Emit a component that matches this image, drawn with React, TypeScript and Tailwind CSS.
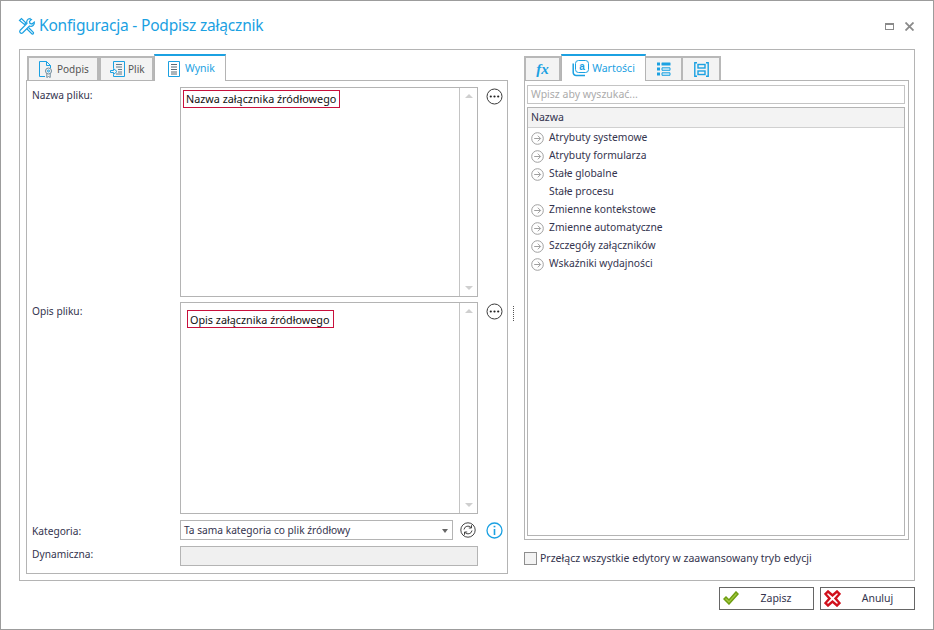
import type { ReactNode } from "react";

const FONT = "font-['Noto_Sans','Open_Sans',sans-serif]";

const treeItems = [
  { name: "Atrybuty systemowe", arrow: true },
  { name: "Atrybuty formularza", arrow: true },
  { name: "Stałe globalne", arrow: true },
  { name: "Stałe procesu", arrow: false },
  { name: "Zmienne kontekstowe", arrow: true },
  { name: "Zmienne automatyczne", arrow: true },
  { name: "Szczegóły załączników", arrow: true },
  { name: "Wskaźniki wydajności", arrow: true },
];

function ToolsIcon() {
  return (
    <svg width="18" height="18" viewBox="0 0 18 18" fill="none" stroke="#1ba1e2" strokeWidth="1.2">
      <path d="M1.500 3.500 3.500 1.500 8 6 6.500 7.500Z" />
      <path d="M12 1.500a3.500 3.500 0 0 0-3 5L2 13.500a1.800 1.800 0 0 0 2.500 2.500l7-7a3.500 3.500 0 0 0 4.800-4l-2.300 2-2-.6-.5-2 2-2a3 3 0 0 0-1.500-.4Z" />
      <path d="M10.500 10.500 15.500 15.500a1.200 1.200 0 0 1-1.500 1.500L9 12" />
    </svg>
  );
}

function SignIcon() {
  return (
    <svg width="14" height="17" viewBox="0 0 14 17" fill="none" stroke="#1ba1e2" strokeWidth="1">
      <path d="M6 15.500H.5V.5H7.500L11.500 4.500V7" />
      <path d="M7.500.5V4.500H11.500" />
      <circle cx="9.500" cy="10" r="3" stroke="#6f8a9a" />
      <circle cx="9.500" cy="10" r="1" stroke="#1ba1e2" />
      <path d="M7.800 12.500V16.500L9.500 15.500 11.200 16.500V12.500" stroke="#6f8a9a" />
    </svg>
  );
}

function FileIcon() {
  return (
    <svg width="15" height="17" viewBox="0 0 15 17" fill="none" stroke="#1ba1e2" strokeWidth="1">
      <path d="M3.500 7V.5H14.500V15.500H3.500V14" />
      <path d="M6 3.500H12M6 6H12M8 8.500H12M8 11H12M6 13H12" stroke="#5f7a8a" />
      <path d="M.5 9.500H3.500V7.500L7 10.500 3.500 13.500V11.500H.5Z" />
    </svg>
  );
}

function DocIcon() {
  return (
    <svg width="12" height="16" viewBox="0 0 12 16" fill="none" stroke="#1ba1e2" strokeWidth="1">
      <path d="M.5.5H11.500V15.500H.5Z" />
      <path d="M3 3.500H9M3 6H9M3 8.500H9M3 11H9M3 13H9" stroke="#5a6a75" />
    </svg>
  );
}

function ValueIcon() {
  return (
    <svg width="17" height="17" viewBox="0 0 17 17" fill="none" stroke="#1ba1e2" strokeWidth="1">
      <rect x="3.500" y="0.500" width="13" height="12" rx="3" />
      <path d="M1.200 3.500V12.500A3 3 0 0 0 4.200 15.500H13" strokeWidth="1.500" />
      <text x="10" y="10" textAnchor="middle" fontSize="10" fill="#1ba1e2" stroke="none" fontWeight="700" fontFamily="Liberation Sans, sans-serif">a</text>
    </svg>
  );
}

function ListIcon() {
  return (
    <svg width="14" height="14" viewBox="0 0 14 14" fill="#1ba1e2">
      <rect x="0" y="0.500" width="3" height="3" />
      <rect x="0" y="5.500" width="3" height="3" />
      <rect x="0" y="10.500" width="3" height="3" />
      <rect x="4.500" y="0.500" width="9" height="3" rx="0.500" />
      <path d="M5 5.800h8v2.500H5ZM5 10.800h8v2.500H5Z" fill="#d5eefa" stroke="#1ba1e2" />
    </svg>
  );
}

function FormIcon() {
  return (
    <svg width="15" height="15" viewBox="0 0 15 15" fill="none" stroke="#1ba1e2" strokeWidth="1.400">
      <path d="M3 .8H.8V14.200H3M12 .8H14.200V14.200H12" />
      <rect x="4" y="2.500" width="7" height="3.500" />
      <rect x="4" y="9" width="7" height="3.500" />
    </svg>
  );
}

function MoreButton() {
  return (
    <svg width="17" height="17" viewBox="0 0 17 17" className="shrink-0">
      <circle cx="8.500" cy="8.500" r="7.500" fill="none" stroke="#3a3a3a" />
      <circle cx="4.800" cy="8.500" r="1.100" fill="#222" />
      <circle cx="8.500" cy="8.500" r="1.100" fill="#222" />
      <circle cx="12.200" cy="8.500" r="1.100" fill="#222" />
    </svg>
  );
}

function ArrowCircle() {
  return (
    <svg width="13" height="13" viewBox="0 0 13 13" fill="none" stroke="#a0a0a0">
      <circle cx="6.500" cy="6.500" r="5.800" />
      <path d="M3.200 6.500H9.500M6.800 3.700 9.600 6.500 6.800 9.300" />
    </svg>
  );
}

function InactiveTab({ label, icon, width, pad, gap }: { label: string; icon: ReactNode; width: string; pad: string; gap: string }) {
  return (
    <div className={`flex h-[24px] items-center border-2 border-b-0 border-[#b8b8b8] bg-[#f3f3f3] text-[10px] text-[#555] ${width} ${pad} ${gap}`}>
      {icon}
      <span>{label}</span>
    </div>
  );
}

function Scroller() {
  return (
    <div className="flex w-[18px] shrink-0 flex-col items-center justify-between border-l border-[#c4c4c4] py-[6px]">
      <div className="h-0 w-0 border-x-[4px] border-b-[4px] border-x-transparent border-b-[#cfcfcf]" />
      <div className="h-0 w-0 border-x-[4px] border-t-[4px] border-x-transparent border-t-[#cfcfcf]" />
    </div>
  );
}

function TextRow({ label, tag, height, tagClass, labelClass }: { label: string; tag: string; height: string; tagClass: string; labelClass: string }) {
  return (
    <div className={`flex ${height}`}>
      <div className={`w-[148px] shrink-0 text-[10.200px] ${labelClass}`}>{label}</div>
      <div className="flex w-[298px] shrink-0 border border-[#b4b4b4]">
        <div className="flex-1">
          <span className={`inline-block h-[18px] border border-[#c8103c] pl-[2px] pr-[3px] text-[10.800px] text-[#111] ${tagClass}`}>{tag}</span>
        </div>
        <Scroller />
      </div>
      <div className="ml-[8px] mt-[1px]">
        <MoreButton />
      </div>
    </div>
  );
}

export default function App() {
  return (
    <div className={`flex h-[630px] w-[934px] flex-col overflow-hidden border border-[#9c9c9c] bg-white text-[10.500px] text-[#34344e] ${FONT}`}>
      {/* Naglowek */}
      <div className="flex h-[48px] shrink-0 items-center pl-[17px] pr-[19px] pt-[2px]">
        <ToolsIcon />
        <h1 className="ml-[3px] text-[15.500px] font-normal tracking-[-0.2px] text-[#1ba1e2]">Konfiguracja - Podpisz załącznik</h1>
        <div className="ml-auto flex items-center gap-[11px]">
          <div className="h-[7px] w-[9px] border border-t-2 border-[#8a8a8a]" />
          <svg width="9" height="9" viewBox="0 0 9 9" stroke="#8a8a8a" strokeWidth="1.800">
            <path d="M.5.5 8.500 8.500M8.500.5.500 8.500" />
          </svg>
        </div>
      </div>

      {/* Ramka */}
      <div className="ml-[18px] flex h-[532px] w-[896px] shrink-0 border border-[#b4b4b4] pl-[6px] pt-[4px]">
        {/* Lewa kolumna */}
        <div className="flex w-[482px] shrink-0 flex-col">
          <div className="flex h-[26px] items-end pl-[1px]">
            <InactiveTab label="Podpis" icon={<SignIcon />} width="w-[72px]" pad="pl-[10px]" gap="gap-[4px]" />
            <InactiveTab label="Plik" icon={<FileIcon />} width="w-[55px]" pad="pl-[9px]" gap="gap-[3px]" />
            <div className="relative z-10 -mb-px flex h-[27px] w-[72px] items-center gap-[5px] border-x border-x-[#b4b4b4] border-t-2 border-t-[#1ba1e2] bg-white pl-[13px] text-[#1ba1e2]">
              <DocIcon />
              <span>Wynik</span>
            </div>
          </div>
          <div className="flex h-[494px] flex-col border border-[#b4b4b4] pl-[5px] pt-[6px]">
            <TextRow label="Nazwa pliku:" tag="Nazwa załącznika źródłowego" height="h-[210px]" tagClass="ml-[2px] mt-[2px] leading-[16px]" labelClass="pt-[1px]" />
            <div className="mt-[5px]">
              <TextRow label="Opis pliku:" tag="Opis załącznika źródłowego" height="h-[212px]" tagClass="ml-[6px] mt-[7px] leading-[17px]" labelClass="pt-[2px]" />
            </div>
            <div className="mt-[6px] flex h-[20px] items-center">
              <div className="w-[148px] shrink-0 pt-[3px] text-[10.200px]">Kategoria:</div>
              <div className="flex h-full w-[273px] shrink-0 items-center justify-between border border-[#b4b4b4] pl-[3px] pr-[4px] pt-[1px] text-[10.200px]">
                <span>Ta sama kategoria co plik źródłowy</span>
                <div className="h-0 w-0 border-x-[3px] border-t-[4px] border-x-transparent border-t-[#666]" />
              </div>
              <svg width="16" height="16" viewBox="0 0 16 16" fill="none" stroke="#444" className="ml-[7px] shrink-0">
                <circle cx="8" cy="8" r="7.200" />
                <path d="M4 7.500a4 4 0 0 1 7-2M12 8.500a4 4 0 0 1-7 2" />
                <path d="M11.500 3.200V6H8.800M4.500 12.800V10H7.200" />
              </svg>
              <svg width="17" height="17" viewBox="0 0 17 17" fill="none" stroke="#1ba1e2" className="ml-[10px] shrink-0">
                <circle cx="8.500" cy="8.500" r="7.500" strokeWidth="1.300" />
                <path d="M8.500 7V13" strokeWidth="1.600" />
                <path d="M8.500 3.800V5.300" strokeWidth="1.800" />
              </svg>
            </div>
            <div className="mt-[6px] flex h-[20px] items-center">
              <div className="w-[148px] shrink-0 pb-[3px] text-[10.200px]">Dynamiczna:</div>
              <div className="h-full w-[298px] shrink-0 border border-[#b4b4b4] bg-[#f0f0f0]" />
            </div>
          </div>
        </div>

        {/* Splitter */}
        <div className="w-[16px] shrink-0 pl-[5px] pt-[252px]">
          <div className="h-[15px] border-l border-dotted border-[#555]" />
        </div>

        {/* Prawa kolumna */}
        <div className="flex w-[385px] shrink-0 flex-col">
          <div className="flex h-[26px] items-end">
            <div className="flex h-[24px] w-[37px] items-center justify-center border-2 border-b-0 border-[#b8b8b8] bg-[#f3f3f3] font-['Liberation_Serif',serif] text-[15px] font-bold italic text-[#1ba1e2]">
              fx
            </div>
            <div className="relative z-10 -mb-px flex h-[27px] w-[85px] items-center justify-center gap-[3px] border-x border-x-[#b4b4b4] border-t-2 border-t-[#1ba1e2] bg-white text-[#1ba1e2]">
              <ValueIcon />
              <span>Wartości</span>
            </div>
            <div className="flex h-[24px] w-[37px] items-center justify-center border-2 border-b-0 border-l-0 border-[#b8b8b8] bg-[#f3f3f3]">
              <ListIcon />
            </div>
            <div className="flex h-[24px] w-[38px] items-center justify-center border-2 border-b-0 border-l-0 border-[#b8b8b8] bg-[#f3f3f3]">
              <FormIcon />
            </div>
          </div>
          <div className="flex h-[460px] flex-col border border-[#b4b4b4] pb-[3px] pl-[2px] pr-[3px] pt-[4px]">
            <div className="flex h-[19px] shrink-0 items-center border border-[#c4c4c4] pl-[3px] text-[#ababab]">Wpisz aby wyszukać...</div>
            <div className="mt-[3px] flex-1 border border-[#b4b4b4]">
              <div className="flex h-[20px] items-center border-b border-[#d0d0d0] bg-[#f3f3f3] pl-[3px]">Nazwa</div>
              <ul className="pt-[1px] text-[10.300px]">
                {treeItems.map((item) => (
                  <li key={item.name} className="flex h-[18px] items-center pl-[3px]">
                    <span className="flex w-[18px] shrink-0 items-center">{item.arrow && <ArrowCircle />}</span>
                    {item.name}
                  </li>
                ))}
              </ul>
            </div>
          </div>
          <label className="mt-[11px] flex items-center gap-[3px]">
            <span className="h-[13px] w-[13px] border border-[#8e8e8e] bg-[#f3f3f3]" />
            Przełącz wszystkie edytory w zaawansowany tryb edycji
          </label>
        </div>
      </div>

      {/* Przyciski */}
      <div className="mr-[18px] mt-[6px] flex justify-end gap-[6px]">
        <button className="relative flex h-[23px] w-[95px] items-center justify-center border border-[#666] pl-[19px]">
          <svg width="16" height="14" viewBox="0 0 16 14" fill="none" stroke="#6f9e12" strokeWidth="1.500" className="absolute left-[3px] top-[3px]">
            <path d="M1 8 3 6 6 9 13 1 15 3 6 13Z" fill="#a3c940" />
          </svg>
          Zapisz
        </button>
        <button className="relative flex h-[23px] w-[95px] items-center justify-center border border-[#666] pl-[20px]">
          <svg width="17" height="17" viewBox="0 0 17 17" fill="none" stroke="#d1101c" strokeWidth="2.400" className="absolute left-[3px] top-[2px]">
            <path d="M4 1.500 8.500 5.500 13 1.500 15.500 4 11.500 8.500 15.500 13 13 15.500 8.500 11.500 4 15.500 1.500 13 5.500 8.500 1.500 4Z" />
          </svg>
          Anuluj
        </button>
      </div>
    </div>
  );
}
